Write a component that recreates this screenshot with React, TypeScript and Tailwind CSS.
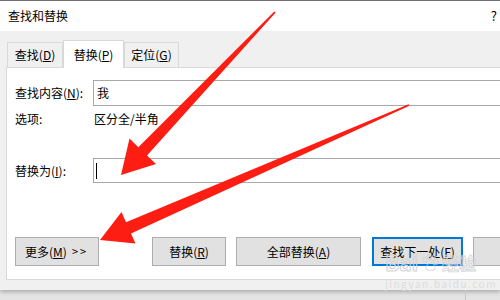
const font = { fontFamily: '"Microsoft YaHei", "Noto Sans CJK SC", "Noto Sans", sans-serif' };

const Tab = ({ label, hot, active }: { label: string; hot: string; active?: boolean }) => (
  <div
    className={
      active
        ? "relative z-10 h-[28px] -mb-px flex items-center justify-center border border-b-0 border-[#d9d9d9] bg-white w-[61px]"
        : "h-[25px] mt-[2px] flex items-center justify-center border border-b-0 border-[#d9d9d9] bg-[#f0f0f0]"
    }
  >
    <span className="text-[12px] leading-none text-black">
      {label}(<u>{hot}</u>)
    </span>
  </div>
);

const Btn = ({ children, width, primary, className = "" }: { children: React.ReactNode; width: string; primary?: boolean; className?: string }) => (
  <div
    className={`h-[29px] flex items-center justify-center bg-[#e1e1e1] text-[12px] text-black shrink-0 ${width} ${
      primary ? "border-2 border-[#0078d7]" : "border border-[#adadad]"
    } ${className}`}
  >
    {children}
  </div>
);

const Arrows = () => (
  <svg className="absolute inset-0 pointer-events-none" width="500" height="300" viewBox="0 0 500 300">
    {/* arrow 1: from top, pointing at replace input */}
    <polygon
      fill="#fe1d13"
      points="275.7,12.6 274.3,11.4 138.3,147.2 129.5,138.6 121,175 156,164 147,155.4"
    />
    {/* arrow 2: from right, pointing at more button */}
    <polygon
      fill="#fe1d13"
      points="409.4,105.8 408.6,104.2 126,222.3 121.5,212 100,240 135.5,243.5 131,233.6"
    />
  </svg>
);

// faint site watermark in the lower right
const Watermark = () => (
  <div className="absolute left-[385px] top-[252px] pointer-events-none">
    <div className="flex items-center gap-[3px]">
      <span className="text-[21px] font-bold leading-none text-transparent" style={{ WebkitTextStroke: "1px #d4d4d4" }}>
        Bai
      </span>
      <svg width="18" height="18" viewBox="0 0 18 18" className="opacity-60">
        <g fill="none" stroke="#cfcfcf" strokeWidth="1.2">
          <ellipse cx="4" cy="6" rx="2" ry="2.5" />
          <ellipse cx="8" cy="3" rx="2" ry="2.5" />
          <ellipse cx="12" cy="4" rx="2" ry="2.5" />
          <ellipse cx="15" cy="8" rx="2" ry="2.5" />
          <path d="M5 14c0-3 3-5 5-5s4 2 4 5c0 2-2 3-4 2-2 1-5 0-5-2z" />
        </g>
      </svg>
      <span className="text-[17px] font-bold leading-none text-transparent" style={{ WebkitTextStroke: "0.8px #d4d4d4" }}>
        经验
      </span>
    </div>
    <div className="mt-[6px] text-[10px] leading-none tracking-[1.5px] text-[#dcdcdc]">jingyan.baidu.com</div>
  </div>
);

export default function App() {
  return (
    <div className="relative w-[500px] h-[300px] overflow-hidden bg-[#e4e4e4]" style={font}>
      <div className="flex flex-col h-[290px] bg-[#f0f0f0] shadow-[0_2px_4px_rgba(0,0,0,0.25)]">
        {/* title bar */}
        <div className="h-[31px] shrink-0 bg-white border-t border-[#707070] flex items-center justify-between pl-[8px] pr-[3px]">
          <span className="text-[12px] text-black">查找和替换</span>
          <span className="text-[13px] text-black">?</span>
        </div>

        {/* tabs */}
        <div className="flex items-start pl-[7px] pt-[9px]">
          <div className="w-[56px]">
            <Tab label="查找" hot="D" />
          </div>
          <Tab label="替换" hot="P" active />
          <div className="w-[55px]">
            <Tab label="定位" hot="G" />
          </div>
        </div>

        {/* panel */}
        <div className="ml-[6px] w-[520px] h-[213px] border border-[#d9d9d9] bg-white pl-[8px] pt-[12px] flex flex-col">
          <div className="flex items-center h-[26px]">
            <span className="w-[78px] text-[12px] text-black">
              查找内容(<u>N</u>):
            </span>
            <div className="h-[26px] flex-1 border border-[#a8a8a8] flex items-center pl-[3px] text-[12px] text-black">我</div>
          </div>
          <div className="flex items-center h-[24px] mt-[1px]">
            <span className="w-[79px] text-[12px] text-black">选项:</span>
            <span className="text-[12px] text-black">区分全/半角</span>
          </div>
          <div className="flex items-center h-[25px] mt-[27px]">
            <span className="w-[78px] text-[12px] text-black">
              替换为(<u>I</u>):
            </span>
            <div className="h-[25px] flex-1 border border-[#a8a8a8] flex items-center pl-[2px]">
              <div className="w-px h-[16px] bg-black" />
            </div>
          </div>
          <div className="flex items-center mt-[54px]">
            <Btn width="w-[84px]" className="justify-start pl-[9px]">
              更多(<u>M</u>)<span className="ml-[5px] tracking-[2px] text-[11px]">&gt;&gt;</span>
            </Btn>
            <Btn width="w-[74px]" className="ml-[53px]">
              替换(<u>R</u>)
            </Btn>
            <Btn width="w-[125px]" className="ml-[10px]">
              全部替换(<u>A</u>)
            </Btn>
            <Btn width="w-[91px]" className="ml-[11px]" primary>
              查找下一处(<u>F</u>)
            </Btn>
            <Btn width="w-[60px]" className="ml-[10px]">
              <span />
            </Btn>
          </div>
        </div>
      </div>
      <div className="absolute left-[465px] top-[290px] w-px h-[10px] bg-[#c8c8c8]" />

      <Watermark />
      <Arrows />
    </div>
  );
}
